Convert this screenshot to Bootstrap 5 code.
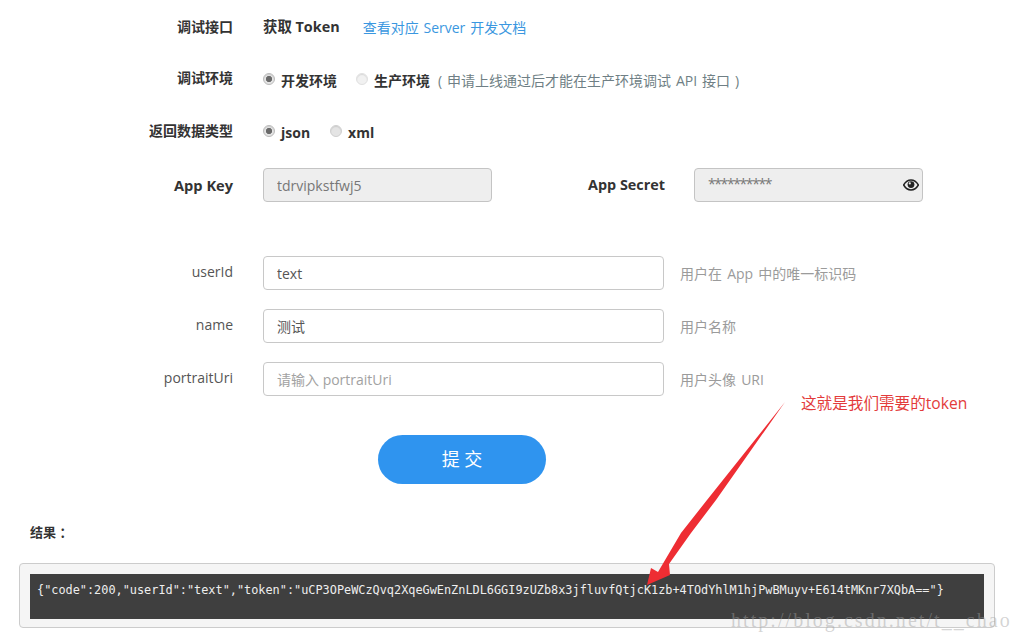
<!DOCTYPE html>
<html lang="zh-CN">
<head>
<meta charset="utf-8">
<title>调试</title>
<link rel="stylesheet" href="https://cdn.jsdelivr.net/npm/bootstrap@5.3.0/dist/css/bootstrap.min.css">
<style>
html,body{height:641px;overflow:hidden}
body{background:#fff;color:#333;font-family:"Open Sans","Noto Sans CJK SC",sans-serif;font-size:14px;position:relative}
.pg{padding-top:17px}
.frow{display:flex;align-items:center}
.lbl{width:233px;flex:none;text-align:right;margin:0 30px 0 0;color:#333;line-height:22px;padding-bottom:2px}
.lbl-reg{color:#555}
.lbl-key{padding-bottom:1px;font-size:14.6px}
.strong{font-weight:700}
.r1{height:22px;margin-bottom:29px}
.r2{height:22px;margin-bottom:31px}
.r3{height:22px;margin-bottom:25px}
.r4{height:34px;margin-bottom:54px}
.r5{height:34px;margin-bottom:19px}
.r6{height:34px;margin-bottom:39px}
.tok{font-size:14.4px;padding-bottom:2px}
.doc{color:#3a97e0;text-decoration:none;margin-left:23px;word-spacing:1.2px;padding-bottom:2px}
.hint{color:#6f7f85;margin-left:8px;word-spacing:1.3px;padding-top:2px}
.rad{display:inline-flex;align-items:center;font-weight:700;color:#333}
.r2 .rad{padding-top:2px}
.gap-r{margin-right:19px}
.r3 .gap-r{margin-right:20px}
.rad .form-check-input{width:12px;height:12px;margin:0 6px 3px 0;background-color:#e4e4e4;border:1px solid #cfcfcf;background-image:none;box-shadow:inset 0 1px 1px rgba(0,0,0,.1);flex:none}
.rad .form-check-input:checked{background-color:#e4e4e4;border-color:#bbb;background-image:radial-gradient(circle,#6a6a6a 0,#6a6a6a 2.8px,transparent 3.4px)}
.rad.off .form-check-input{background-color:#f1f1f1;border-color:#e0e0e0}
.fld{height:34px;border:1px solid #c8c8c8;border-radius:4px;font-size:14px;color:#555;padding:0 13px;box-shadow:none}
.fld::placeholder{color:#a2a2a2}
.fld:disabled,.fld[readonly]{background:#eee;color:#777;border-color:#c4c4c4}
.w-key{width:229px;flex:none}
.w-in{width:401px;flex:none}
.sec-lbl{width:173px;flex:none;text-align:right;margin:0 29px 0 0;font-weight:700;font-size:14.4px}
.secwrap{position:relative;width:229px;flex:none}
.secwrap .fld{width:100%;padding-bottom:4px;letter-spacing:-1.4px}
.eye{position:absolute;right:4px;top:10px;width:16px;height:14px}
.help{color:#9b9b9b;margin-left:16px;word-spacing:1.5px}
.submit-wrap{padding-left:378px;margin-bottom:37px}
.go{width:168px;height:49px;border-radius:25px;background:#2f94ef;border:0;color:#fff;font-size:18px;padding:0}
.res-title{margin:0 0 20px 30px;font-weight:700;font-size:13px;line-height:22px;color:#333}
.res-box{margin-left:19px;width:976px;height:65px;background:#f5f5f5;border:1px solid #ccc;border-radius:4px;padding:10px}
.res-code{display:block;height:45px;background:#3f3f3f;color:#eee;font-family:"DejaVu Sans Mono","Liberation Mono",monospace;font-size:11.87px;line-height:16px;padding:8px 7px;white-space:nowrap;overflow:hidden}
.note{position:absolute;left:801px;top:392px;color:#e33b3b;font-size:15.6px;line-height:22px;white-space:nowrap}
.arrow{position:absolute;left:0;top:0;width:1023px;height:641px;pointer-events:none}
.mark-wm{position:absolute;left:731px;top:607px;font-family:"Liberation Serif",serif;font-size:20px;line-height:26px;letter-spacing:2.05px;color:rgba(160,160,160,.45);white-space:nowrap}
</style>
</head>
<body>
<form class="pg">
  <div class="frow r1">
    <label class="lbl strong">调试接口</label>
    <span class="strong tok">获取 Token</span>
    <a class="doc" href="#">查看对应 Server 开发文档</a>
  </div>
  <div class="frow r2">
    <label class="lbl strong">调试环境</label>
    <label class="rad gap-r"><input class="form-check-input" type="radio" name="env" checked>开发环境</label>
    <label class="rad off"><input class="form-check-input" type="radio" name="env">生产环境</label>
    <span class="hint">( 申请上线通过后才能在生产环境调试 API 接口 )</span>
  </div>
  <div class="frow r3">
    <label class="lbl strong">返回数据类型</label>
    <label class="rad gap-r"><input class="form-check-input" type="radio" name="ty" checked>json</label>
    <label class="rad"><input class="form-check-input" type="radio" name="ty">xml</label>
  </div>
  <div class="frow r4">
    <label class="lbl lbl-key strong">App Key</label>
    <input class="form-control fld w-key" readonly value="tdrvipkstfwj5">
    <label class="sec-lbl">App Secret</label>
    <div class="secwrap">
      <input class="form-control fld" readonly value="**********">
      <svg class="eye" viewBox="0 0 16 14" aria-hidden="true"><path d="M.6 7C2.6 3.600 5 2 8 2s5.400 1.600 7.400 5c-2 3.400-4.400 5-7.400 5S2.600 10.400.6 7z" fill="none" stroke="#222" stroke-width="1.500"/><circle cx="8" cy="6.600" r="3.400" fill="#222"/><circle cx="6.800" cy="5.400" r="1.100" fill="#eee"/></svg>
    </div>
  </div>
  <div class="frow r5">
    <label class="lbl lbl-reg">userId</label>
    <input class="form-control fld w-in" value="text">
    <span class="help">用户在 App 中的唯一标识码</span>
  </div>
  <div class="frow r5">
    <label class="lbl lbl-reg">name</label>
    <input class="form-control fld w-in" value="测试">
    <span class="help">用户名称</span>
  </div>
  <div class="frow r6">
    <label class="lbl lbl-reg">portraitUri</label>
    <input class="form-control fld w-in" placeholder="请输入 portraitUri">
    <span class="help">用户头像 URI</span>
  </div>
  <div class="submit-wrap"><button type="button" class="btn go">提 交</button></div>
  <div class="res-title">结果 ：</div>
  <div class="res-box"><code class="res-code">{"code":200,"userId":"text","token":"uCP3OPeWCzQvq2XqeGwEnZnLDL6GGI9zUZb8x3jfluvfQtjcK1zb+4TOdYhlM1hjPwBMuyv+E614tMKnr7XQbA=="}</code></div>
</form>
<div class="note">这就是我们需要的token</div>
<svg class="arrow" viewBox="0 0 1023 641" aria-hidden="true"><polygon points="785,402 716,500 691,533 669,564 670,575 647,585 651,568 658,572 681,533 707,500" fill="#ee2d33"/></svg>
<div class="mark-wm">http://blog.csdn.net/t__chao</div>
<script src="https://cdn.jsdelivr.net/npm/bootstrap@5.3.0/dist/js/bootstrap.bundle.min.js"></script>
</body>
</html>
